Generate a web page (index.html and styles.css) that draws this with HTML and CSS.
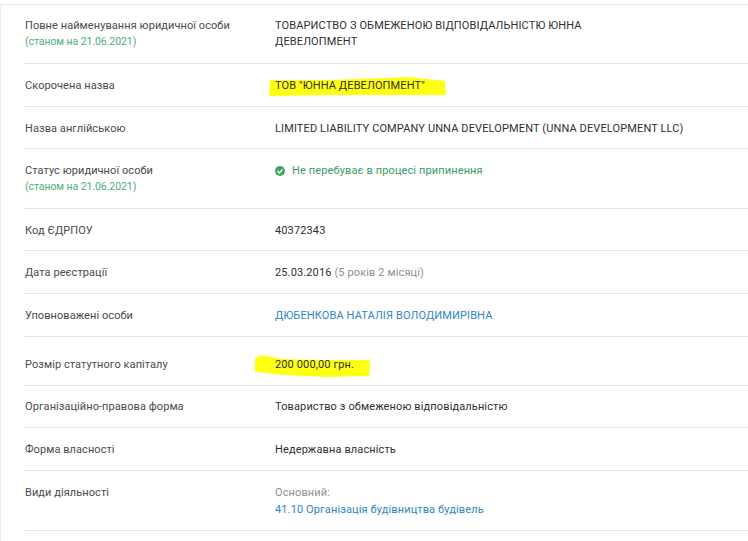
FILE: index.html
```html
<!DOCTYPE html>
<html lang="uk">
<head>
<meta charset="utf-8">
<title>Юридична особа</title>
<link rel="stylesheet" href="styles.css">
</head>
<body>
<main class="card">
  <div class="row r59">
    <div class="label">Повне найменування юридичної особи<div class="asof">(станом на 21.06.2021)</div></div>
    <div class="value narrow">ТОВАРИСТВО З ОБМЕЖЕНОЮ ВІДПОВІДАЛЬНІСТЮ ЮННА ДЕВЕЛОПМЕНТ</div>
  </div>
  <div class="row r43">
    <div class="label">Скорочена назва</div>
    <div class="value"><span class="marked"><svg class="hl hl-name" viewBox="0 0 177 19" aria-hidden="true"><path d="M1 3 L60 3 L140 0 L176 4 L177 18 L120 18 L60 18 L0 19 Z"/></svg><span class="marked-text">ТОВ "ЮННА ДЕВЕЛОПМЕНТ"</span></span></div>
  </div>
  <div class="row r42">
    <div class="label">Назва англійською</div>
    <div class="value">LIMITED LIABILITY COMPANY UNNA DEVELOPMENT (UNNA DEVELOPMENT LLC)</div>
  </div>
  <div class="row r60">
    <div class="label">Статус юридичної особи<div class="asof">(станом на 21.06.2021)</div></div>
    <div class="value status"><svg class="check" viewBox="0 0 10 10" aria-hidden="true"><circle cx="5" cy="5" r="5"/><path d="M2.6 5.1 L4.4 6.9 L7.5 3.6"/></svg>Не перебуває в процесі припинення</div>
  </div>
  <div class="row r42">
    <div class="label">Код ЄДРПОУ</div>
    <div class="value">40372343</div>
  </div>
  <div class="row r43">
    <div class="label">Дата реєстрації</div>
    <div class="value">25.03.2016 <span class="muted">(5 років 2 місяці)</span></div>
  </div>
  <div class="row r43">
    <div class="label">Уповноважені особи</div>
    <div class="value"><a class="link" href="#">ДЮБЕНКОВА НАТАЛІЯ ВОЛОДИМИРІВНА</a></div>
  </div>
  <div class="row r49">
    <div class="label">Розмір статутного капіталу</div>
    <div class="value"><span class="marked"><svg class="hl hl-cap" viewBox="0 0 115 23" aria-hidden="true"><path d="M0 5 L5 1 L28 5 L60 6 L115 6 L114 22 L70 23 L30 21 L0 18 Z"/></svg><span class="marked-text">200 000,00 грн.</span></span></div>
  </div>
  <div class="row r42 tight">
    <div class="label">Організаційно-правова форма</div>
    <div class="value">Товариство з обмеженою відповідальністю</div>
  </div>
  <div class="row r43">
    <div class="label">Форма власності</div>
    <div class="value">Недержавна власність</div>
  </div>
  <div class="row r60">
    <div class="label">Види діяльності</div>
    <div class="value"><div class="muted sub">Основний:</div><a class="link" href="#">41.10 Організація будівництва будівель</a></div>
  </div>
</main>
</body>
</html>
```

FILE: styles.css
```css
html, body {
  margin: 0;
  padding: 0;
  background: #fff;
}
body {
  height: 541px;
  overflow: hidden;
  font-family: Roboto, "Liberation Sans", sans-serif;
  font-size: 11px;
  line-height: 16px;
  color: #333;
}
.card {
  box-sizing: border-box;
  height: 537px;
  margin-top: 4px;
  padding-left: 24px;
  border-left: 1px solid #ececec;
  border-top: 1px solid #e4e4e4;
}
.row {
  box-sizing: border-box;
  display: flex;
  padding: 14px 0 0 0;
  border-bottom: 1px solid #e4e4e4;
}
.r59 { height: 59px; padding-top: 13px; }
.r60 { height: 60px; }
.r42 { height: 42px; }
.r43 { height: 43px; }
.r49 { height: 49px; padding-top: 20px; }
.tight { padding-top: 13px; }
.label {
  width: 250px;
  flex: none;
  color: #4a4a4a;
  letter-spacing: .07px;
}
.asof {
  color: #4caf73;
  font-size: 10.5px;
  letter-spacing: -.08px;
}
.value {
  color: #2f2f2f;
  letter-spacing: .125px;
}
.narrow { width: 330px; }
.status {
  display: flex;
  align-items: center;
  height: 16px;
  color: #3d9a66;
}
.check {
  width: 10px;
  height: 10px;
  margin-right: 7px;
}
.check circle { fill: #3fa564; }
.check path {
  fill: none;
  stroke: #fff;
  stroke-width: 1.4;
}
.muted { color: #8f8f8f; }
.sub { margin-bottom: 1px; }
.link {
  color: #2f86c1;
  text-decoration: none;
}
.marked { position: relative; display: inline-block; }
.marked-text { position: relative; }
.hl {
  position: absolute;
  fill: #ffff14;
}
.hl-name { left: -6px; top: -1px; width: 177px; height: 19px; }
.hl-cap { left: -20px; top: -3px; width: 115px; height: 23px; }
```
